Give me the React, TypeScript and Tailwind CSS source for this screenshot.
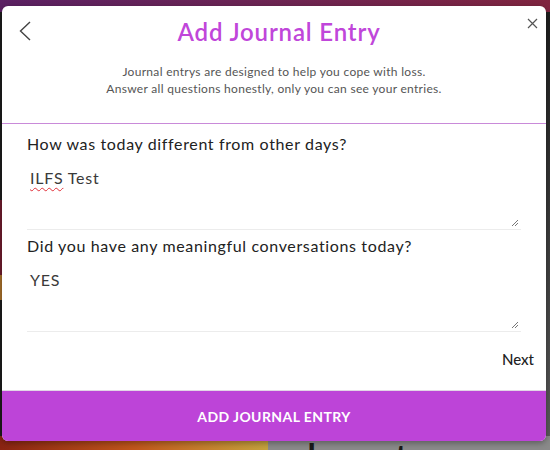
import React from 'react';

const questions = [
  { label: 'How was today different from other days?', answer: 'ILFS Test', flagged: true },
  { label: 'Did you have any meaningful conversations today?', answer: 'YES', flagged: false },
];

const ResizeGrip = () => (
  <svg className="absolute right-[2px] bottom-[2px]" width="8" height="8" viewBox="0 0 8 8">
    <path d="M7 1 L1 7 M7 4 L4 7" stroke="#777" strokeWidth="1" fill="none" />
  </svg>
);

const Answer = ({ text, flagged }: { text: string; flagged: boolean }) => {
  const [first, ...rest] = text.split(' ');
  return (
    <div className="relative h-[74px] border-b border-[#ececec] pt-[11px] pl-[3px] text-[16px] leading-[22px] tracking-[0.05em] text-[#3a3a3a]">
      {flagged ? (
        <>
          <span className="underline decoration-wavy decoration-[#e0303a] decoration-1 underline-offset-[3px]">{first}</span>{' '}
          {rest.join(' ')}
        </>
      ) : (
        text
      )}
      <ResizeGrip />
    </div>
  );
};

// the page that sits behind the dialog
const Backdrop = () => (
  <div className="w-[550px] h-[450px] flex flex-col bg-[#1c1c1c]">
    <div className="h-[12px] shrink-0 bg-gradient-to-r from-[#5b2063] to-[#80243f]" />
    <div className="flex-1 flex justify-between">
      <div className="w-[3px] flex flex-col pt-[188px]">
        <div className="h-[75px] bg-[#6e1c2c]" />
        <div className="h-[25px] bg-[#a8702a]" />
      </div>
      <div className="w-[6px] bg-gradient-to-b from-[#1e1e1e] to-[#5a5a5a]" />
    </div>
    <div className="h-[14px] shrink-0 flex">
      <div className="w-[268px] bg-gradient-to-r from-[#8a2412] via-[#c0561c] to-[#c4a23e]" />
      <div className="flex-1 bg-[#8a8a8a] overflow-hidden pl-[38px]">
        <div className="pt-[1px] text-[48px] leading-[48px] text-[#1a1a1a]">lovetrees</div>
      </div>
    </div>
  </div>
);

export default function App() {
  return (
    <div className="relative w-[550px] h-[450px] overflow-hidden font-['Lato',sans-serif]">
      <Backdrop />

      {/* dialog */}
      <div className="absolute left-[2px] top-[6px] w-[544px] h-[435px] rounded-[6px] bg-white overflow-hidden flex flex-col shadow-[0_2px_6px_rgba(0,0,0,0.35)]">
        <div className="h-[118px] shrink-0 border-b border-[#c98ad9] grid grid-cols-[44px_1fr_44px]">
          <div className="pl-[16px] pt-[14px]">
            <button className="p-[1px]">
              <svg width="12" height="20" viewBox="0 0 12 20">
                <path d="M11 1 L1.5 10 L11 19" stroke="#444" strokeWidth="1.4" fill="none" />
              </svg>
            </button>
          </div>
          <div className="text-center">
            <h1 className="pt-[10px] pl-[10px] text-[24px] leading-[32px] font-semibold tracking-[0.035em] text-[#c046da]">
              Add Journal Entry
            </h1>
            <p className="mt-[15px] text-[12px] leading-[17px] tracking-[0.025em] text-[#555]">
              Journal entrys are designed to help you cope with loss.
              <br />
              Answer all questions honestly, only you can see your entries.
            </p>
          </div>
          <div className="flex justify-end pr-[7px] pt-[11px]">
            <button className="h-[13px] p-[1px]">
              <svg width="11" height="11" viewBox="0 0 11 11">
                <path d="M1 1 L10 10 M10 1 L1 10" stroke="#555" strokeWidth="1.2" fill="none" />
              </svg>
            </button>
          </div>
        </div>

        <div className="pl-[25px] pr-[25px] pt-[8px] flex flex-col gap-[4px]">
          {questions.map((q) => (
            <div key={q.label}>
              <label className="block text-[16px] leading-[24px] tracking-[0.04em] text-[#222]">{q.label}</label>
              <Answer text={q.answer} flagged={q.flagged} />
            </div>
          ))}
        </div>

        <div className="mt-[17px] pr-[12px] flex justify-end">
          <button className="text-[15px] leading-[20px] font-medium text-[#222]">Next</button>
        </div>

        <div className="flex-1" />

        <button className="h-[51px] shrink-0 border-t border-[#e2d6e6] bg-[#bd44d8] text-white text-[14px] font-bold tracking-[0.03em]">
          ADD JOURNAL ENTRY
        </button>
      </div>
    </div>
  );
}
